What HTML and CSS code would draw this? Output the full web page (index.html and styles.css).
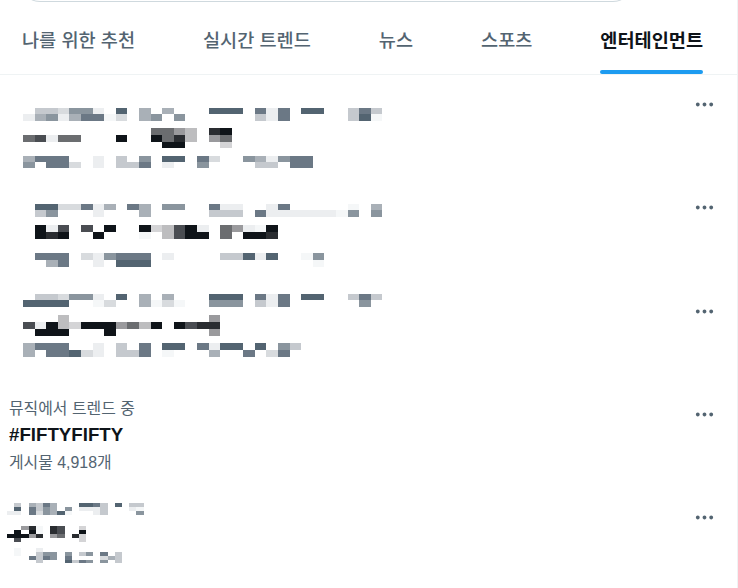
FILE: index.html
```html
<!DOCTYPE html>
<html lang="ko">
<head>
    <meta charset="UTF-8">
    <meta name="viewport" content="width=device-width, initial-scale=1.0">
    <title>탐색하기 - 엔터테인먼트</title>
    <link rel="stylesheet" href="styles.css">
</head>
<body>
    <main class="explore">
        <div class="search"></div>

        <nav class="tabs">
            <a href="#" class="tab"><span class="tab-label">나를 위한 추천</span></a>
            <a href="#" class="tab"><span class="tab-label">실시간 트렌드</span></a>
            <a href="#" class="tab"><span class="tab-label">뉴스</span></a>
            <a href="#" class="tab"><span class="tab-label">스포츠</span></a>
            <a href="#" class="tab active"><span class="tab-label">엔터테인먼트</span><i class="tab-bar"></i></a>
        </nav>

        <section class="trends">
            <div class="trend">
                <div class="trend-body trend-blur" data-blur="0"></div>
                <button class="trend-more" aria-label="더 보기">
                    <svg viewBox="0 0 24 24"><path d="M3 12c0-1.1.9-2 2-2s2 .9 2 2-.9 2-2 2-2-.9-2-2zm9 2c1.1 0 2-.9 2-2s-.9-2-2-2-2 .9-2 2 .9 2 2 2zm7 0c1.1 0 2-.9 2-2s-.9-2-2-2-2 .9-2 2 .9 2 2 2z"/></svg>
                </button>
            </div>

            <div class="trend">
                <div class="trend-body trend-blur" data-blur="1"></div>
                <button class="trend-more" aria-label="더 보기">
                    <svg viewBox="0 0 24 24"><path d="M3 12c0-1.1.9-2 2-2s2 .9 2 2-.9 2-2 2-2-.9-2-2zm9 2c1.1 0 2-.9 2-2s-.9-2-2-2-2 .9-2 2 .9 2 2 2zm7 0c1.1 0 2-.9 2-2s-.9-2-2-2-2 .9-2 2 .9 2 2 2z"/></svg>
                </button>
            </div>

            <div class="trend">
                <div class="trend-body trend-blur" data-blur="2"></div>
                <button class="trend-more" aria-label="더 보기">
                    <svg viewBox="0 0 24 24"><path d="M3 12c0-1.1.9-2 2-2s2 .9 2 2-.9 2-2 2-2-.9-2-2zm9 2c1.1 0 2-.9 2-2s-.9-2-2-2-2 .9-2 2 .9 2 2 2zm7 0c1.1 0 2-.9 2-2s-.9-2-2-2-2 .9-2 2 .9 2 2 2z"/></svg>
                </button>
            </div>

            <div class="trend">
                <div class="trend-body">
                    <div class="trend-meta">뮤직에서 트렌드 중</div>
                    <div class="trend-name">#FIFTYFIFTY</div>
                    <div class="trend-meta trend-count">게시물 4,918개</div>
                </div>
                <button class="trend-more" aria-label="더 보기">
                    <svg viewBox="0 0 24 24"><path d="M3 12c0-1.1.9-2 2-2s2 .9 2 2-.9 2-2 2-2-.9-2-2zm9 2c1.1 0 2-.9 2-2s-.9-2-2-2-2 .9-2 2 .9 2 2 2zm7 0c1.1 0 2-.9 2-2s-.9-2-2-2-2 .9-2 2 .9 2 2 2z"/></svg>
                </button>
            </div>

            <div class="trend">
                <div class="trend-body trend-blur" data-blur="3"></div>
                <button class="trend-more" aria-label="더 보기">
                    <svg viewBox="0 0 24 24"><path d="M3 12c0-1.1.9-2 2-2s2 .9 2 2-.9 2-2 2-2-.9-2-2zm9 2c1.1 0 2-.9 2-2s-.9-2-2-2-2 .9-2 2 .9 2 2 2zm7 0c1.1 0 2-.9 2-2s-.9-2-2-2-2 .9-2 2 .9 2 2 2z"/></svg>
                </button>
            </div>
        </section>
    </main>

    <script src="script.js"></script>
</body>
</html>
```

FILE: styles.css
```css
* {
    box-sizing: border-box;
}

body {
    margin: 0;
    background: #ffffff;
    color: #0f1419;
    font-family: "Liberation Sans", "Noto Sans CJK KR", sans-serif;
    overflow: hidden;
}

/* Page column */
.explore {
    width: 738px;
    height: 588px;
    border-right: 1px solid #eff3f4;
    overflow: hidden;
}

/* Search box, scrolled mostly out of view */
.search {
    width: 615px;
    height: 42px;
    margin: -40px 0 0 19px;
    border: 1px solid #cfd9de;
    border-radius: 9999px;
}

/* Tabs (list is scrolled to its right end) */
.tabs {
    display: flex;
    justify-content: flex-end;
    height: 73px;
    border-bottom: 1px solid #eff3f4;
    overflow: hidden;
}

.tab {
    flex: none;
    display: flex;
    flex-direction: column;
    padding: 0 34px;
    color: #536471;
    font-size: 18.6px;
    font-weight: 500;
    text-decoration: none;
}

.tab-label {
    margin-top: 29px;
    line-height: 20px;
    white-space: nowrap;
}

.tab.active {
    color: #0f1419;
    font-weight: 700;
}

.tab-bar {
    margin-top: auto;
    height: 4px;
    border-radius: 9999px;
    background: #1d9bf0;
}

/* Trend rows */
.trend {
    display: flex;
    height: 103.33px;
    padding: 14px 21px 0 9px;
}

.trend-body {
    flex: 1;
    min-width: 0;
}

.trend-meta {
    font-size: 15.9px;
    line-height: 20px;
    color: #536471;
}

.trend-name {
    margin-top: 3px;
    font-size: 18.7px;
    line-height: 26px;
    font-weight: 700;
}

.trend-count {
    margin-top: 5px;
}

.trend-more {
    flex: none;
    width: 23px;
    height: 23px;
    margin-top: 4px;
    padding: 0;
    border: none;
    background: none;
    color: #536471;
    cursor: pointer;
}

.trend-more svg {
    display: block;
    width: 23px;
    height: 23px;
    fill: currentColor;
}

/* Pixelated placeholder strips */
.blur-line {
    display: grid;
}
```

FILE: script.js
```javascript
// Pixelated placeholders for the hidden trends.
// One string per row of cells, each character is a palette key, "." is empty.
(function() {
    const palette = {
        '1': '#f5f7f8',
        '2': '#eceef0',
        '3': '#d8dbde',
        '4': '#c5c9ce',
        '5': '#a9b0b7',
        '6': '#8a959e',
        '7': '#6b7885',
        '8': '#536471',
        '9': '#0f1419',
        'k': '#2a2d31',
        'm': '#4a4d52',
        'n': '#6b6d70',
        'p': '#9a9a9d',
        'q': '#bdbdbf',
        'r': '#d4d4d6'
    };

    // top = distance from the top of the trend row, in px
    const blurs = [
        { x: 23, cell: 11.6, lines: [
            { top: 33, row: 6.33, rows: [
                '.443662.8.5.5...888.727.88..474',
                '256257713.56.6......427.....481'
            ] },
            { top: 53, row: 6.77, rows: [
                '...........nnpq.k9',
                'nm2nn...9..9nkq.pn',
                '............99...r'
            ] },
            { top: 80.7, row: 6.33, rows: [
                '5777..2.4.6.88.73..652677',
                '6.773.2.447.2..6....44.77'
            ] }
        ] },
        { x: 23, cell: 11.6, lines: [
            { top: 25.7, row: 6.35, rows: [
                '.8833725.75.66..722..27.....1.5',
                '.46...2...5.....444.722222216.6'
            ] },
            { top: 46.4, row: 7, rows: [
                '.92m.m.9..9rqm92.np219',
                '.9k9..9...1.qm99.n.99k'
            ] },
            { top: 74.4, row: 7, rows: [
                '.777.326777.2....44828..16',
                '..57..2.888..............1'
            ] }
        ] },
        { x: 23, cell: 11.6, lines: [
            { top: 12.4, row: 6.35, rows: [
                '.443662.8.5.5...888.727.88..474',
                '8888..13..5131..666.427......6'
            ] },
            { top: 33.1, row: 7, rows: [
                '...q............p',
                'm29qr999pnq9.9mkk',
                '.999...9........p'
            ] },
            { top: 61.1, row: 7, rows: [
                '5777..2.4.7.88.7288.8.64',
                '5.77832.447.1...5..7.37'
            ] }
        ] },
        { x: 7, cell: 7.2, lines: [
            { top: 15, row: 4, rows: [
                '.4.5475...8874.8.44',
                '.8.7465.6.2224...21',
                '22.736581...24....6'
            ] },
            { top: 38, row: 4, rows: [
                '..pk1.km..r',
                '.9.91.km..9',
                '999pk.pn.kr',
                '.m........r'
            ] },
            { top: 60, row: 3.75, rows: [
                '.1..2',
                '.1..466.6.46.7.4',
                '...7476.7....354',
                '....4...8476.6.4'
            ] }
        ] }
    ];

    const rowPaddingTop = 14;
    const rowPaddingLeft = 9;

    document.querySelectorAll('.trend-blur').forEach(function(box) {
        const blur = blurs[Number(box.dataset.blur)];
        let y = rowPaddingTop;

        blur.lines.forEach(function(line) {
            const cols = Math.max.apply(null, line.rows.map(r => r.length));
            const strip = document.createElement('div');
            strip.className = 'blur-line';
            strip.style.marginTop = (line.top - y) + 'px';
            strip.style.marginLeft = (blur.x - rowPaddingLeft) + 'px';
            strip.style.gridTemplateColumns = 'repeat(' + cols + ', ' + blur.cell + 'px)';
            strip.style.gridAutoRows = line.row + 'px';

            line.rows.forEach(function(r) {
                for (let i = 0; i < cols; i++) {
                    const cell = document.createElement('span');
                    const color = palette[r[i]];
                    if (color) cell.style.background = color;
                    strip.appendChild(cell);
                }
            });

            box.appendChild(strip);
            y = line.top + line.row * line.rows.length;
        });
    });
})();
```
